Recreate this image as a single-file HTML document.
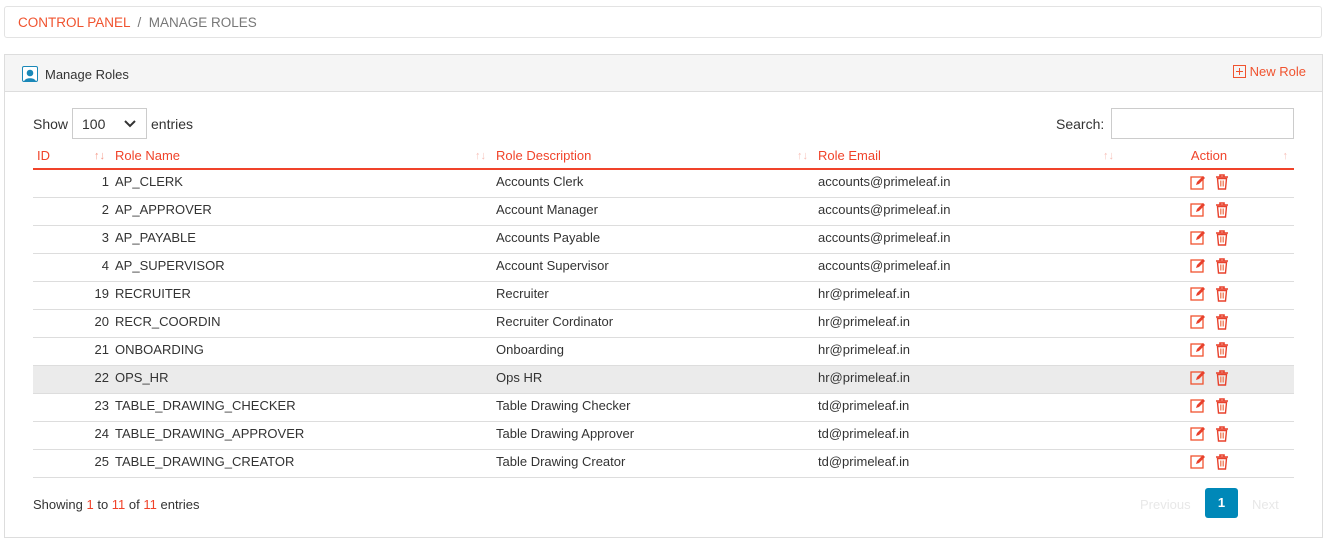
<!DOCTYPE html>
<html><head><meta charset="utf-8"><style>
*{box-sizing:border-box;margin:0;padding:0}
body{width:1328px;height:558px;background:#fff;font-family:"Liberation Sans",sans-serif;font-size:13px;color:#333;position:relative;overflow:hidden}
.bc{position:absolute;left:4px;top:6px;width:1318px;height:32px;border:1px solid #e3e3e3;border-radius:3px;padding:8px 13px;font-size:13.5px;color:#777}
.bc .r{color:#f0532f}
.panel{position:absolute;left:4px;top:54px;width:1319px;height:484px;border:1px solid #ddd}
.ph{height:37px;background:#f5f5f5;border-bottom:1px solid #ddd;position:relative}
.ph .t{position:absolute;left:40px;top:12px;font-size:13px;color:#333}
.ph .ic{position:absolute;left:17px;top:11px;width:16px;height:16px;border:1px solid #1a88b8;border-radius:2px;overflow:hidden;background:#fff}
.ph .nr{position:absolute;right:16px;top:9px;color:#f0532f;font-size:13px}
.abs{position:absolute}
table{position:absolute;left:28px;top:92px;width:1261px;border-collapse:collapse}
th{color:#f0432a;font-weight:normal;text-align:left;height:22px;border-bottom:2px solid #f0432a;position:relative;padding:1px 0 0 4px;vertical-align:top}
th .s{position:absolute;right:6px;top:3px;color:#f7c0b8;font-size:11px}
td{height:28px;border-bottom:1px solid #ddd;padding:0 0 3px 4px}
tr.g td{background:#ebebeb}
.id{text-align:right;padding-right:2px}
.act{text-align:center}
</style></head><body>
<div class="bc"><span class="r">CONTROL PANEL</span> &nbsp;/&nbsp; MANAGE ROLES</div>
<div class="panel">
<div class="ph"><div class="ic"><svg width="16" height="16"><circle cx="7" cy="6" r="3.3" fill="#1a88b8"/><path d="M1 15c0-5 12-5 12 0z" fill="#1a88b8"/></svg></div><span class="t">Manage Roles</span>
<span class="nr"><svg width="13" height="13" style="vertical-align:-2px"><rect x=".5" y=".5" width="12" height="12" fill="none" stroke="#f0532f"/><path d="M6.5 3v7M3 6.5h7" stroke="#f0532f"/></svg> New Role</span></div>
<div class="abs" style="left:28px;top:61px;font-size:14px">Show</div>
<div class="abs" style="left:67px;top:53px;width:75px;height:31px;border:1px solid #ccc;padding:7px 9px;font-size:14px">100<svg width="12" height="8" style="position:absolute;right:10px;top:11px"><path d="M1 1l5 5 5-5" stroke="#333" stroke-width="2" fill="none"/></svg></div>
<div class="abs" style="left:146px;top:61px;font-size:14px">entries</div>
<div class="abs" style="left:1051px;top:61px;font-size:14px">Search:</div>
<div class="abs" style="left:1106px;top:53px;width:183px;height:31px;border:1px solid #ccc"></div>
<table>
<tr><th style="width:78px">ID<span class="s" style="color:#f59a8a">↑↓</span></th><th style="width:381px">Role Name<span class="s">↑↓</span></th><th style="width:322px">Role Description<span class="s">↑↓</span></th><th style="width:306px">Role Email<span class="s">↑↓</span></th><th style="text-align:center">Action<span class="s">↑</span></th></tr>
<tr><td class="id">1</td><td>AP_CLERK</td><td>Accounts Clerk</td><td>accounts@primeleaf.in</td><td class="act">I</td></tr>
<tr><td class="id">2</td><td>AP_APPROVER</td><td>Account Manager</td><td>accounts@primeleaf.in</td><td class="act">I</td></tr>
<tr><td class="id">3</td><td>AP_PAYABLE</td><td>Accounts Payable</td><td>accounts@primeleaf.in</td><td class="act">I</td></tr>
<tr><td class="id">4</td><td>AP_SUPERVISOR</td><td>Account Supervisor</td><td>accounts@primeleaf.in</td><td class="act">I</td></tr>
<tr><td class="id">19</td><td>RECRUITER</td><td>Recruiter</td><td>hr@primeleaf.in</td><td class="act">I</td></tr>
<tr><td class="id">20</td><td>RECR_COORDIN</td><td>Recruiter Cordinator</td><td>hr@primeleaf.in</td><td class="act">I</td></tr>
<tr><td class="id">21</td><td>ONBOARDING</td><td>Onboarding</td><td>hr@primeleaf.in</td><td class="act">I</td></tr>
<tr class="g"><td class="id">22</td><td>OPS_HR</td><td>Ops HR</td><td>hr@primeleaf.in</td><td class="act">I</td></tr>
<tr><td class="id">23</td><td>TABLE_DRAWING_CHECKER</td><td>Table Drawing Checker</td><td>td@primeleaf.in</td><td class="act">I</td></tr>
<tr><td class="id">24</td><td>TABLE_DRAWING_APPROVER</td><td>Table Drawing Approver</td><td>td@primeleaf.in</td><td class="act">I</td></tr>
<tr><td class="id">25</td><td>TABLE_DRAWING_CREATOR</td><td>Table Drawing Creator</td><td>td@primeleaf.in</td><td class="act">I</td></tr>
</table>
<div class="abs" style="left:28px;top:442px">Showing <span style="color:#f0432a">1</span> to <span style="color:#f0432a">11</span> of <span style="color:#f0432a">11</span> entries</div>
<div class="abs" style="left:1135px;top:442px;color:#e8e8e8">Previous</div>
<div class="abs" style="left:1200px;top:433px;width:33px;height:30px;background:#0088b8;border-radius:3px;color:#fff;text-align:center;line-height:30px;font-weight:bold">1</div>
<div class="abs" style="left:1247px;top:442px;color:#e8e8e8">Next</div>
</div>
<script>
var ed='<svg width="15" height="15" style="vertical-align:middle"><rect x="1" y="2" width="12" height="12" fill="none" stroke="#f0532f" stroke-width="1.3"/><path d="M6 10l1-3 6-6 2 2-6 6z" fill="#e8412c"/></svg>';
var tr='<svg width="14" height="16" style="vertical-align:middle;margin-left:10px"><path d="M1 3h12M5 3V1h4v2" stroke="#e8412c" stroke-width="1.6" fill="none"/><path d="M2.5 4.5h9l-1 10.5h-7z" fill="none" stroke="#e8412c" stroke-width="1.4"/><path d="M5.5 6.5v6M7 6.5v6M8.5 6.5v6" stroke="#f08a6a"/></svg>';
document.querySelectorAll('td.act').forEach(function(t){t.innerHTML=ed+tr});
</script>
</body></html>
